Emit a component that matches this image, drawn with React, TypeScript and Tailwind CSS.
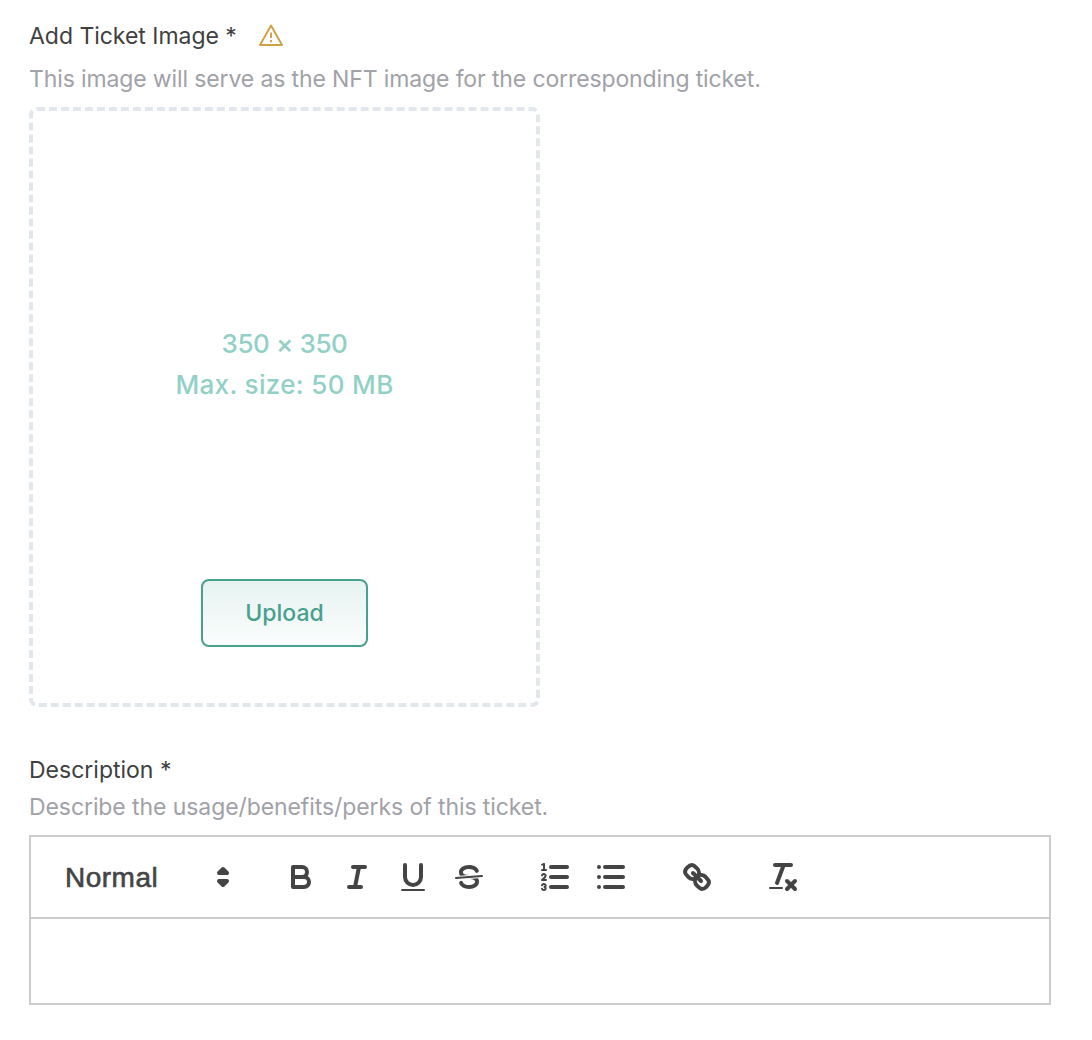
import type { ReactNode } from "react";

function Icon({ children }: { children: ReactNode }) {
  return (
    <button className="flex h-12 w-14 items-center justify-center">
      <svg
        viewBox="0 0 18 18"
        className="h-9 w-9"
        fill="none"
        stroke="#444"
        strokeWidth="2"
        strokeLinecap="round"
        strokeLinejoin="round"
      >
        {children}
      </svg>
    </button>
  );
}

function Toolbar() {
  return (
    <div className="flex h-[82px] items-center border-b-2 border-[#ccc] pl-[34px]">
      <button className="mr-[32px] flex h-12 w-[176px] items-center justify-between">
        <span className="pt-0.5 font-['Liberation_Sans',sans-serif] text-[28px] leading-none font-normal tracking-[0.5px] whitespace-nowrap text-[#444] [-webkit-text-stroke:0.6px_#444]">
          Normal
        </span>
        <svg
          viewBox="0 0 18 18"
          className="h-9 w-9"
          fill="none"
          stroke="#444"
          strokeWidth="2"
          strokeLinecap="round"
          strokeLinejoin="round"
        >
          <polygon points="7 11 9 13 11 11 7 11" />
          <polygon points="7 7 9 5 11 7 7 7" />
        </svg>
      </button>
      <div className="flex">
        <Icon>
          <path d="M5,4H9.5A2.5,2.5,0,0,1,12,6.5v0A2.5,2.5,0,0,1,9.5,9H5A0,0,0,0,1,5,9V4A0,0,0,0,1,5,4Z" />
          <path d="M5,9h5.5A2.5,2.5,0,0,1,13,11.5v0A2.5,2.5,0,0,1,10.5,14H5a0,0,0,0,1,0,0V9A0,0,0,0,1,5,9Z" />
        </Icon>
        <Icon>
          <line x1="7" x2="13" y1="4" y2="4" />
          <line x1="5" x2="11" y1="14" y2="14" />
          <line x1="8" x2="10" y1="14" y2="4" />
        </Icon>
        <Icon>
          <path d="M5,3V9a4.012,4.012,0,0,0,4,4H9a4.012,4.012,0,0,0,4-4V3" />
          <rect fill="#444" stroke="none" height="1" rx="0.5" width="12" x="3" y="15" />
        </Icon>
        <Icon>
          <line strokeWidth="1" x1="15.5" x2="2.5" y1="8.5" y2="9.5" />
          <path
            fill="#444"
            stroke="none"
            d="M9.007,8C6.542,7.791,6,7.519,6,6.5,6,5.792,7.283,5,9,5c1.571,0,2.765.679,2.969,1.309a1,1,0,0,0,1.9-.617C13.356,4.106,11.354,3,9,3,6.2,3,4,4.538,4,6.5a3.2,3.2,0,0,0,.5,1.843Z"
          />
          <path
            fill="#444"
            stroke="none"
            d="M8.984,10C11.457,10.208,12,10.479,12,11.5c0,.708-1.283,1.5-3,1.5-1.571,0-2.765-.679-2.969-1.309a1,1,0,1,0-1.9.617C4.644,13.894,6.646,15,9,15c2.8,0,5-1.538,5-3.5a3.2,3.2,0,0,0-.5-1.843Z"
          />
        </Icon>
      </div>
      <div className="ml-[30px] flex">
        <Icon>
          <line x1="7" x2="15" y1="4" y2="4" />
          <line x1="7" x2="15" y1="9" y2="9" />
          <line x1="7" x2="15" y1="14" y2="14" />
          <line strokeWidth="1" x1="2.5" x2="4.5" y1="5.5" y2="5.5" />
          <path
            fill="#444"
            stroke="none"
            d="M3.5,6A0.5,0.5,0,0,1,3,5.5V3.085l-0.276.138A0.5,0.5,0,0,1,2.053,3c-0.124-.247-0.023-0.324.224-0.447l1-.5A0.5,0.5,0,0,1,4,2.5v3A0.5,0.5,0,0,1,3.5,6Z"
          />
          <path strokeWidth="1" d="M4.5,10.5h-2c0-.234,1.85-1.076,1.85-2.234A0.959,0.959,0,0,0,2.5,8.156" />
          <path
            strokeWidth="1"
            d="M2.5,14.846a0.959,0.959,0,0,0,1.85-.109A0.7,0.7,0,0,0,3.75,14a0.688,0.688,0,0,0,.6-0.736,0.959,0.959,0,0,0-1.85-.109"
          />
        </Icon>
        <Icon>
          <line x1="6" x2="15" y1="4" y2="4" />
          <line x1="6" x2="15" y1="9" y2="9" />
          <line x1="6" x2="15" y1="14" y2="14" />
          <line x1="3" x2="3" y1="4" y2="4" />
          <line x1="3" x2="3" y1="9" y2="9" />
          <line x1="3" x2="3" y1="14" y2="14" />
        </Icon>
      </div>
      <div className="ml-[30px] flex">
        <Icon>
          <line x1="7" x2="11" y1="7" y2="11" />
          <path d="M8.9,4.577a3.476,3.476,0,0,1,.36,4.679A3.476,3.476,0,0,1,4.577,8.9C3.185,7.5,2.035,6.4,4.217,4.217S7.5,3.185,8.9,4.577Z" />
          <path d="M13.423,9.1a3.476,3.476,0,0,0-4.679-.36,3.476,3.476,0,0,0,.36,4.679c1.392,1.392,2.5,2.542,4.679.36S14.815,10.5,13.423,9.1Z" />
        </Icon>
      </div>
      <div className="ml-[30px] flex">
        <Icon>
          <line x1="5" x2="13" y1="3" y2="3" />
          <line x1="6" x2="9.35" y1="12" y2="3" />
          <line x1="11" x2="15" y1="11" y2="15" />
          <line x1="15" x2="11" y1="11" y2="15" />
          <rect fill="#444" stroke="none" height="1" rx="0.5" width="7" x="2" y="14" />
        </Icon>
      </div>
    </div>
  );
}

export default function App() {
  return (
    <main className="h-[1040px] w-[1092px] overflow-hidden bg-white pl-[29px] font-['Inter',sans-serif] text-[23px]">
      <div className="flex h-[72px] items-center text-[#404040]">
        <h2 className="w-[229px] tracking-[-0.03px] whitespace-nowrap">Add Ticket Image *</h2>
        <svg
          viewBox="0 0 26 24"
          className="mb-0.5 h-6 w-[26px]"
          fill="none"
          stroke="#d0a044"
          strokeWidth="1.9"
          strokeLinejoin="round"
        >
          <path d="M13 2.5 24 22H2Z" />
          <path d="M13 9.5v5.5M13 17v2.2" />
        </svg>
      </div>
      <p className="flex h-[35px] items-center pb-5 tracking-[-0.125px] whitespace-nowrap text-[#a1a1a8]">
        This image will serve as the NFT image for the corresponding ticket.
      </p>
      <section className="flex h-[600px] w-[511px] flex-col items-center rounded-[8px] border-4 border-dashed border-[#e2e7ee]">
        <div className="mt-[212px] text-center text-[26px] leading-[41px] font-medium whitespace-nowrap text-[#92d0c6]">
          <p className="tracking-[-0.4px]">350 × 350</p>
          <p className="tracking-[0.33px]">Max. size: 50 MB</p>
        </div>
        <button className="mt-[174px] flex h-[68px] w-[167px] items-center justify-center rounded-[8px] border-2 border-[#48a08f] bg-linear-to-b from-[#e6f3f0] to-[#fbfdfd] font-medium text-[#48a08f]">
          Upload
        </button>
      </section>
      <h2 className="mt-[45px] h-[37px] leading-[36px] whitespace-nowrap text-[#404040]">Description *</h2>
      <p className="h-[46px] leading-[36px] tracking-[-0.085px] whitespace-nowrap text-[#a1a1a8]">
        Describe the usage/benefits/perks of this ticket.
      </p>
      <section className="h-[170px] w-[1022px] border-2 border-[#ccc]">
        <Toolbar />
      </section>
    </main>
  );
}
